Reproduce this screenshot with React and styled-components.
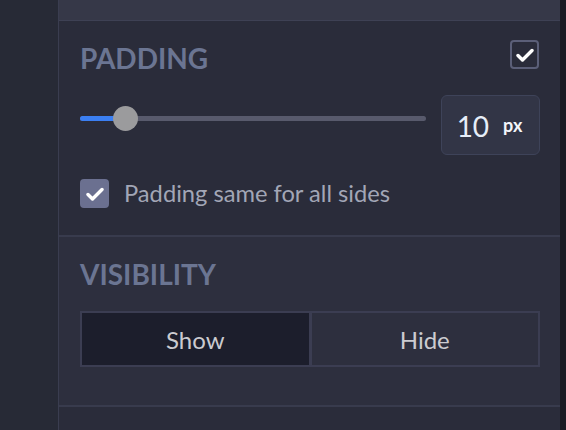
import React, { useState } from "react";
import styled, { createGlobalStyle } from "styled-components";

const GlobalStyle = createGlobalStyle`
  html, body {
    margin: 0;
    padding: 0;
    background: #272a36;
    font-family: Lato, "Open Sans", "Liberation Sans", sans-serif;
  }
`;

const Page = styled.div`
  display: flex;
  width: 566px;
  height: 430px;
  overflow: hidden;
`;

const LeftStrip = styled.div`
  width: 58px;
  flex: none;
  background: #272a36;
  border-right: 1px solid #3a3d50;
`;

const RightStrip = styled.div`
  width: 6px;
  flex: none;
  background: #1a1c24;
`;

const Panel = styled.div`
  flex: 1;
  display: flex;
  flex-direction: column;
  background: #2a2c3a;
`;

const TopBar = styled.div`
  height: 20px;
  background: #363848;
  border-bottom: 1px solid #3e4154;
`;

const Section = styled.section`
  padding: ${(p) => p.$pad || "22px 20px 24px 21px"};
  background: ${(p) => p.$bg || "#2a2c3a"};
  border-bottom: 2px solid #383b4d;
`;

const HeaderRow = styled.div`
  display: flex;
  align-items: center;
  justify-content: space-between;
`;

const Title = styled.h2`
  margin: 0;
  font-size: 28px;
  font-weight: 700;
  color: #6b7592;
  line-height: 34px;
`;

const Box = styled.span`
  box-sizing: border-box;
  width: 29px;
  height: 29px;
  border-radius: 4px;
  display: flex;
  align-items: center;
  justify-content: center;
  flex: none;
  margin: ${(p) => (p.$corner ? "-7px 1px 0 0" : "0")};
  border: 2px solid ${(p) => (p.$filled ? "#6b7090" : "#5b5f78")};
  background: ${(p) => (p.$filled ? "#6b7090" : "transparent")};
  cursor: pointer;
`;

const Check = () => (
  <svg width="18" height="14" viewBox="0 0 18 14">
    <path
      d="M2 7.5 L6.5 12 L16 2.5"
      fill="none"
      stroke="#ffffff"
      strokeWidth="3.4"
      strokeLinecap="round"
      strokeLinejoin="round"
    />
  </svg>
);

const SliderRow = styled.div`
  display: flex;
  align-items: center;
  gap: 15px;
  margin-top: 20px;
`;

const Track = styled.div`
  position: relative;
  flex: 1;
  height: 5px;
  margin-bottom: 13px;
  border-radius: 3px;
  background: #585a6c;
`;

const Fill = styled.div`
  height: 100%;
  border-radius: 3px 0 0 3px;
  background: #3b7ff2;
`;

const Knob = styled.div`
  position: absolute;
  top: 50%;
  width: 25px;
  height: 25px;
  margin-left: -12px;
  margin-top: -12.5px;
  border-radius: 50%;
  background: #9b9b9d;
`;

const ValueBox = styled.div`
  box-sizing: border-box;
  width: 99px;
  height: 60px;
  flex: none;
  display: flex;
  align-items: center;
  justify-content: center;
  gap: 14px;
  padding-right: 2px;
  background: #323546;
  border: 1px solid #3e4359;
  border-radius: 6px;
`;

const Value = styled.span`
  font-size: 28px;
  color: #e6edf8;
  padding-top: 2px;
`;

const Unit = styled.span`
  font-size: 18px;
  font-weight: 700;
  color: #f4f6fa;
`;

const CheckRow = styled.label`
  display: flex;
  align-items: center;
  gap: 15px;
  margin-top: 24px;
  cursor: pointer;
`;

const CheckLabel = styled.span`
  font-size: 23.7px;
  line-height: 29px;
  color: #a2a6b6;
`;

const Segmented = styled.div`
  display: flex;
  margin-top: 20px;
  border: 2px solid #3b3d52;
  background: #3b3d52;
  gap: 3px;
`;

const Segment = styled.button`
  flex: 1;
  height: 52px;
  border: none;
  margin: 0;
  font-family: inherit;
  font-size: 24px;
  color: #cbcbd0;
  background: ${(p) => (p.$active ? "#1c1e2c" : "#2d2f3e")};
  cursor: pointer;
`;

const Filler = styled.div`
  flex: 1;
  background: #2a2c3a;
`;

export default function App() {
  const [value] = useState(10);
  const [visible, setVisible] = useState(true);
  const pct = 13;

  return (
    <Page>
      <GlobalStyle />
      <LeftStrip />
      <Panel>
        <TopBar />
        <Section $pad="20px 20px 27px 21px">
          <HeaderRow>
            <Title>PADDING</Title>
            <Box $corner>
              <Check />
            </Box>
          </HeaderRow>
          <SliderRow>
            <Track>
              <Fill style={{ width: `${pct}%` }} />
              <Knob style={{ left: `${pct}%` }} />
            </Track>
            <ValueBox>
              <Value>{value}</Value>
              <Unit>px</Unit>
            </ValueBox>
          </SliderRow>
          <CheckRow>
            <Box $filled>
              <Check />
            </Box>
            <CheckLabel>Padding same for all sides</CheckLabel>
          </CheckRow>
        </Section>
        <Section $bg="#2d2f3e" $pad="20px 20px 38px 21px">
          <Title>VISIBILITY</Title>
          <Segmented>
            <Segment $active={visible} onClick={() => setVisible(true)}>
              Show
            </Segment>
            <Segment $active={!visible} onClick={() => setVisible(false)}>
              Hide
            </Segment>
          </Segmented>
        </Section>
        <Filler />
      </Panel>
      <RightStrip />
    </Page>
  );
}
